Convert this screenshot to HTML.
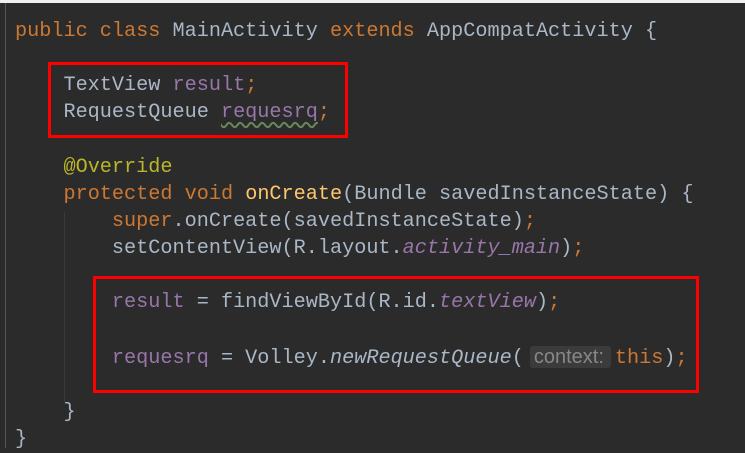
<!DOCTYPE html>
<html><head><style>
body{margin:0;width:745px;height:448px;background:#2b2b2b;overflow:hidden;position:relative;font-family:"Liberation Mono",monospace;}
.top{position:absolute;left:0;top:0;width:745px;height:3px;background:#f0f0f0;}
.gut{position:absolute;left:5px;top:3px;width:1px;height:445px;background:#555;}
.guide{position:absolute;width:1px;background:#3a3a3a;}
pre{position:absolute;left:15px;top:18px;margin:0;font-size:20.2px;line-height:27.13px;color:#a9b7c6;font-family:"Liberation Mono",monospace;}
.k{color:#cc7832}.f{color:#9876aa}.fi{color:#9876aa;font-style:italic}.a{color:#bbb529}.m{color:#ffc66d}.i{font-style:italic}
.w{text-decoration:underline wavy #6a8759;text-underline-offset:4px}
.h{background:#3b3b3b;color:#878787;font-family:"Liberation Sans",sans-serif;font-size:20px;border-radius:3px;padding:0 7px 0 4px;margin-left:6px;margin-right:4px;}
.box{position:absolute;border:3px solid #f00;}
</style></head><body>
<div class="top"></div>
<div class="gut"></div>
<div class="guide" style="left:64px;top:212px;height:190px"></div>
<pre><span class="k">public class</span> MainActivity <span class="k">extends</span> AppCompatActivity {

    TextView <span class="f">result</span><span class="k">;</span>
    RequestQueue <span class="f w">requesrq</span><span class="k">;</span>

    <span class="a">@Override</span>
    <span class="k">protected void</span> <span class="m">onCreate</span>(Bundle savedInstanceState) {
        <span class="k">super</span>.onCreate(savedInstanceState)<span class="k">;</span>
        setContentView(R.layout.<span class="fi">activity_main</span>)<span class="k">;</span>

        <span class="f">result</span> = findViewById(R.id.<span class="fi">textView</span>)<span class="k">;</span>

        <span class="f">requesrq</span> = Volley.<span class="i">newRequestQueue</span>(<span class="h">context:</span><span class="k">this</span>)<span class="k">;</span>

    }
}</pre>
<div class="box" style="left:48px;top:62px;width:294px;height:70px"></div>
<div class="box" style="left:93px;top:276px;width:600px;height:111px"></div>
</body></html>
